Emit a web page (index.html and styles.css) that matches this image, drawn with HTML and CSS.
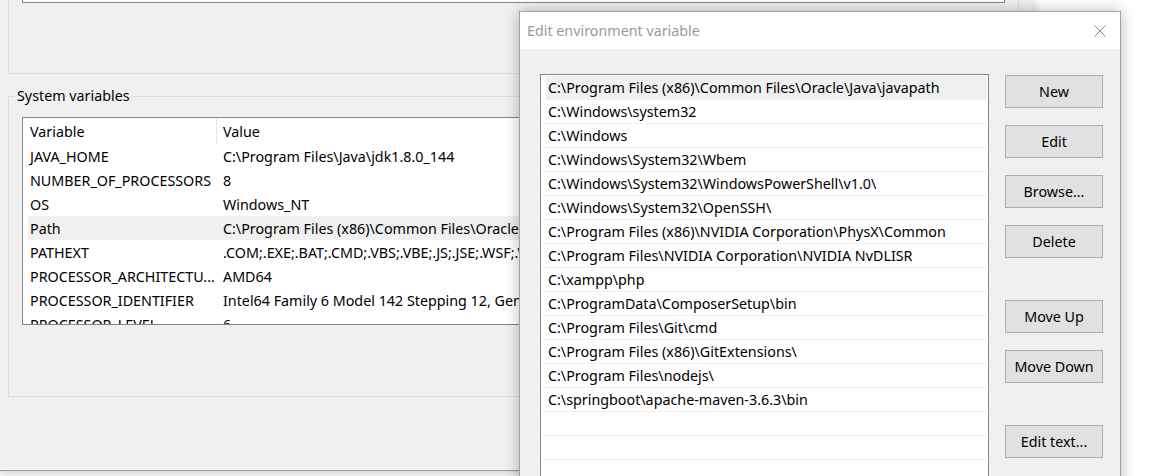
FILE: index.html
```html
<!DOCTYPE html>
<html>
<head>
<meta charset="utf-8">
<link rel="stylesheet" href="styles.css">
</head>
<body>
<div class="screen">
  <div class="bgwin">
    <div class="user-group"><div class="user-list"></div></div>
    <div class="sys-group">
      <span class="group-label">System variables</span>
      <div class="sys-list">
        <div class="sys-head"><div class="c1">Variable</div><div class="c2">Value</div></div>
        <div class="sys-row"><div class="c1">JAVA_HOME</div><div class="c2">C:\Program Files\Java\jdk1.8.0_144</div></div>
        <div class="sys-row"><div class="c1">NUMBER_OF_PROCESSORS</div><div class="c2">8</div></div>
        <div class="sys-row"><div class="c1">OS</div><div class="c2">Windows_NT</div></div>
        <div class="sys-row sel"><div class="c1">Path</div><div class="c2">C:\Program Files (x86)\Common Files\Oracle\Java\javapath;C:\Windows\system32;C:\Windows</div></div>
        <div class="sys-row"><div class="c1">PATHEXT</div><div class="c2">.COM;.EXE;.BAT;.CMD;.VBS;.VBE;.JS;.JSE;.WSF;.WSH;.MSC</div></div>
        <div class="sys-row"><div class="c1">PROCESSOR_ARCHITECTU...</div><div class="c2">AMD64</div></div>
        <div class="sys-row"><div class="c1">PROCESSOR_IDENTIFIER</div><div class="c2">Intel64 Family 6 Model 142 Stepping 12, GenuineIntel</div></div>
        <div class="sys-row"><div class="c1">PROCESSOR_LEVEL</div><div class="c2">6</div></div>
      </div>
    </div>
  </div>

  <div class="dialog">
    <div class="titlebar">
      <span class="title">Edit environment variable</span>
      <svg class="close" width="12" height="12" viewBox="0 0 12 12"><path d="M0.5 0.5 L11.5 11.5 M11.5 0.5 L0.5 11.5" stroke="#8a8a8a" stroke-width="1" fill="none"/></svg>
    </div>
    <div class="dlg-body">
      <div class="path-list">
        <div class="prow sel">C:\Program Files (x86)\Common Files\Oracle\Java\javapath</div>
        <div class="prow">C:\Windows\system32</div>
        <div class="prow">C:\Windows</div>
        <div class="prow">C:\Windows\System32\Wbem</div>
        <div class="prow">C:\Windows\System32\WindowsPowerShell\v1.0\</div>
        <div class="prow">C:\Windows\System32\OpenSSH\</div>
        <div class="prow">C:\Program Files (x86)\NVIDIA Corporation\PhysX\Common</div>
        <div class="prow">C:\Program Files\NVIDIA Corporation\NVIDIA NvDLISR</div>
        <div class="prow">C:\xampp\php</div>
        <div class="prow">C:\ProgramData\ComposerSetup\bin</div>
        <div class="prow">C:\Program Files\Git\cmd</div>
        <div class="prow">C:\Program Files (x86)\GitExtensions\</div>
        <div class="prow">C:\Program Files\nodejs\</div>
        <div class="prow">C:\springboot\apache-maven-3.6.3\bin</div>
        <div class="prow"></div>
        <div class="prow"></div>
        <div class="prow"></div>
      </div>
      <div class="btns">
        <div class="btn">New</div>
        <div class="btn">Edit</div>
        <div class="btn">Browse...</div>
        <div class="btn">Delete</div>
        <div class="btn group-start">Move Up</div>
        <div class="btn">Move Down</div>
        <div class="btn group-start">Edit text...</div>
      </div>
    </div>
  </div>
</div>
</body>
</html>
```

FILE: styles.css
```css
html, body {
  margin: 0;
  padding: 0;
  background: #ffffff;
}

body {
  font-family: "Noto Sans", "Open Sans", sans-serif;
  font-size: 14.3px;
  color: #000;
}

.screen {
  position: relative;
  width: 1176px;
  height: 476px;
  overflow: hidden;
  background: #ffffff;
}

/* background window */
.bgwin {
  width: 1033px;
  height: 471px;
  box-sizing: border-box;
  background: #f0f0f0;
  border-bottom: 1px solid #9c9c9c;
  box-shadow: 0 2px 8px rgba(0, 0, 0, 0.22);
  overflow: hidden;
}

.user-group {
  margin-left: 8px;
  width: 1011px;
  height: 74px;
  box-sizing: border-box;
  border: 1px solid #dcdcdc;
  border-top: none;
  padding-left: 13px;
}

.user-list {
  width: 983px;
  height: 3px;
  box-sizing: border-box;
  border: 1px solid #828790;
  border-top: none;
  background: #fff;
}

.sys-group {
  position: relative;
  margin: 22px 0 0 8px;
  width: 1011px;
  height: 301px;
  box-sizing: border-box;
  border: 1px solid #dcdcdc;
  padding: 20px 0 0 13px;
}

.group-label {
  position: absolute;
  left: 6px;
  top: -11px;
  padding: 0 2px 0 2px;
  line-height: 20px;
  background: #f0f0f0;
  white-space: nowrap;
}

.sys-list {
  width: 1000px;
  height: 208px;
  box-sizing: border-box;
  border: 1px solid #828790;
  background: #ffffff;
  overflow: hidden;
  white-space: nowrap;
}

.sys-head {
  display: flex;
  height: 26px;
}

.sys-head .c1 {
  width: 194px;
  box-sizing: border-box;
  padding: 2px 0 0 7px;
  border-right: 1px solid #e5e5e5;
  line-height: 24px;
}

.sys-head .c2 {
  padding: 2px 0 0 6px;
  line-height: 24px;
}

.sys-row {
  display: flex;
  height: 24px;
  box-sizing: border-box;
  margin-left: 5px;
  padding-top: 2px;
  line-height: 22px;
}

.sys-row.sel {
  background: #f0f0f0;
}

.sys-row .c1 {
  width: 188px;
  flex: none;
  padding-left: 2px;
  box-sizing: border-box;
  overflow: hidden;
}

.sys-row .c2 {
  padding-left: 7px;
}

/* dialog window */
.dialog {
  position: absolute;
  left: 519px;
  top: 11px;
  width: 602px;
  height: 490px;
  box-sizing: border-box;
  border: 1px solid #a3a3a3;
  background: #f0f0f0;
  box-shadow: 0 0 14px rgba(0, 0, 0, 0.28);
}

.titlebar {
  display: flex;
  align-items: center;
  justify-content: space-between;
  height: 37px;
  background: #ffffff;
  padding: 0 14px 0 7px;
}

.title {
  color: #999999;
  font-size: 14.3px;
}

.close {
  display: block;
}

.dlg-body {
  display: flex;
  gap: 16px;
  padding: 25px 0 0 20px;
}

.path-list {
  width: 449px;
  height: 440px;
  box-sizing: border-box;
  border: 1px solid #828790;
  background: #ffffff;
  padding: 1px;
}

.prow {
  height: 24px;
  box-sizing: border-box;
  border-bottom: 1px solid #f0f0f0;
  padding-left: 6px;
  line-height: 23px;
  white-space: nowrap;
}

.prow.sel {
  background: linear-gradient(to right, transparent 4px, #f0f0f0 4px);
}

.btns {
  display: flex;
  flex-direction: column;
  gap: 17px;
  padding-top: 1px;
}

.btn {
  width: 98px;
  height: 33px;
  box-sizing: border-box;
  border: 1px solid #adadad;
  background: #e1e1e1;
  text-align: center;
  line-height: 31px;
}

.btn.group-start {
  margin-top: 25px;
}
```
